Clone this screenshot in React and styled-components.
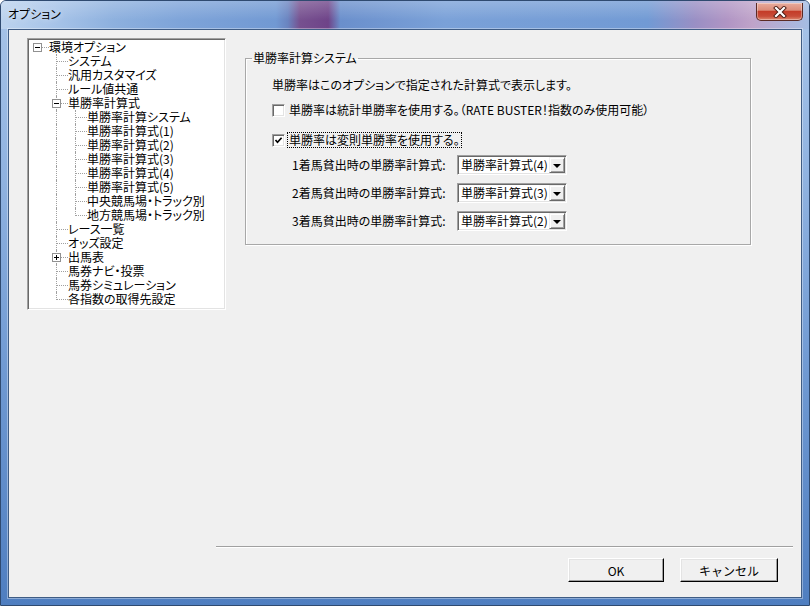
import React from "react";
import styled, { createGlobalStyle } from "styled-components";

const FONT = `"Noto Sans CJK JP", "Liberation Sans", sans-serif`;

const GlobalStyle = createGlobalStyle`
  html, body {
    margin: 0;
    padding: 0;
  }
  body {
    font-family: ${FONT};
    font-size: 12px;
    color: #000;
    font-feature-settings: "palt";
  }
`;

const Window = styled.div`
  width: 810px;
  height: 606px;
  box-sizing: border-box;
  display: flex;
  flex-direction: column;
  border: 1px solid #2f4a70;
  border-radius: 6px 6px 0 0;
  overflow: hidden;
  background: linear-gradient(180deg, #a8c4e8 0%, #8fb2e0 30%, #6f99d2 62%, #4f7ec0 100%);
`;

const TitleBar = styled.div`
  height: 28px;
  flex: none;
  display: flex;
  align-items: flex-start;
  justify-content: space-between;
  padding: 0 6px 0 7px;
  background: linear-gradient(180deg, rgba(255, 255, 255, 0.22), rgba(255, 255, 255, 0) 70%),
    linear-gradient(
      90deg,
      #bcd3ee 0%,
      #a9c5e9 6%,
      #8db0de 14%,
      #7ea4d9 22%,
      #7199d3 34%,
      #6a84c0 35.5%,
      #76508f 37%,
      #6e4388 40.5%,
      #6a8fcc 42%,
      #7aa1d8 55%,
      #719ad4 80%,
      #9a8fc4 86%,
      #b195c4 90%,
      #bfa3c9 93%,
      #a4bde3 100%
    );
`;

const Title = styled.div`
  margin-top: 6px;
  line-height: 14px;
  font-size: 12px;
  color: #000;
  text-shadow: 0 0 6px rgba(255, 255, 255, 0.8);
`;

const CloseButton = styled.div`
  width: 47px;
  height: 18px;
  margin-top: 2px;
  box-sizing: border-box;
  display: flex;
  align-items: center;
  justify-content: center;
  border: 1px solid #5b2a24;
  border-top: none;
  border-radius: 0 0 5px 5px;
  background: linear-gradient(180deg, #e8ab9c 0%, #dc8b78 42%, #c43c28 50%, #c84c38 78%, #de8a70 100%);
  box-shadow: inset 0 0 0 1px rgba(255, 255, 255, 0.35);
`;

const Client = styled.div`
  flex: 1;
  margin: 0 7px 7px 7px;
  border: 1px solid #3f5c84;
  box-shadow: 0 0 0 1px rgba(255, 255, 255, 0.35);
  background: #f0f0f0;
  display: flex;
  flex-direction: column;
`;

const TopArea = styled.div`
  display: flex;
  align-items: flex-start;
  padding: 8px 0 0 18px;
`;

const Tree = styled.div`
  width: 199px;
  height: 272px;
  box-sizing: border-box;
  padding: 1px;
  background: #fff;
  border: 1px solid;
  border-color: #a0a0a0 #fff #fff #a0a0a0;
  box-shadow: inset 1px 1px 0 #696969, inset -1px -1px 0 #e3e3e3;
`;

const TreeRow = styled.div`
  display: flex;
  height: 14px;
  white-space: nowrap;
`;

const Guide = styled.div`
  position: relative;
  width: 19px;
  flex: none;

  &::before {
    content: ${(p) => (p.$v ? '""' : "none")};
    position: absolute;
    left: 8px;
    top: 0;
    height: ${(p) => (p.$v === "top" ? "8px" : "14px")};
    border-left: 1px dotted #a0a0a0;
  }

  &::after {
    content: ${(p) => (p.$h ? '""' : "none")};
    position: absolute;
    left: 9px;
    right: -1px;
    top: 7px;
    border-top: 1px dotted #a0a0a0;
  }
`;

const Expander = styled.div`
  position: absolute;
  z-index: 1;
  left: 4px;
  top: 3px;
  width: 9px;
  height: 9px;
  box-sizing: border-box;
  border: 1px solid #919191;
  background: #fff;

  &::before {
    content: "";
    position: absolute;
    left: 1px;
    top: 3px;
    width: 5px;
    height: 1px;
    background: #000;
  }

  &::after {
    content: ${(p) => (p.$plus ? '""' : "none")};
    position: absolute;
    left: 3px;
    top: 1px;
    width: 1px;
    height: 5px;
    background: #000;
  }
`;

const TreeLabel = styled.span`
  padding-left: 1px;
  line-height: 14px;
  font-size: 12px;
`;

const GroupBox = styled.fieldset`
  margin: 13px 0 0 19px;
  width: 506px;
  box-sizing: border-box;
  padding: 0;
  border: 1px solid #a8a8a8;
  box-shadow: inset 1px 1px 0 #fff, 1px 1px 0 #fff;
  min-width: 0;
`;

const Legend = styled.legend`
  margin-left: 6px;
  padding: 0 1px;
  line-height: 14px;
  font-size: 12px;
`;

const GroupBody = styled.div`
  display: flex;
  flex-direction: column;
  padding: 13px 0 13px 26px;
`;

const Description = styled.div`
  line-height: 14px;
`;

const CheckRow = styled.div`
  display: flex;
  align-items: center;
  height: 16px;
  margin-top: ${(p) => p.$mt}px;
`;

const CheckBox = styled.div`
  width: 13px;
  height: 13px;
  box-sizing: border-box;
  flex: none;
  display: flex;
  align-items: center;
  justify-content: center;
  background: #fff;
  border: 1px solid;
  border-color: #a0a0a0 #fff #fff #a0a0a0;
  box-shadow: inset 1px 1px 0 #696969, inset -1px -1px 0 #e3e3e3;
`;

const CheckLabel = styled.span`
  margin-left: 2px;
  padding: 0 1px;
  line-height: 14px;
  border: 1px ${(p) => (p.$focus ? "dotted #000" : "solid transparent")};
`;

const FormulaRow = styled.div`
  display: flex;
  align-items: center;
  height: 20px;
  margin-top: ${(p) => p.$mt}px;
  padding-left: 20px;
`;

const FormulaLabel = styled.span`
  width: 165px;
  flex: none;
  line-height: 14px;
`;

const Combo = styled.div`
  width: 110px;
  height: 20px;
  box-sizing: border-box;
  display: flex;
  align-items: stretch;
  background: #fff;
  border: 1px solid;
  border-color: #a0a0a0 #fff #fff #a0a0a0;
  box-shadow: inset 1px 1px 0 #696969, inset -1px -1px 0 #e3e3e3;
  padding: 1px;
`;

const ComboText = styled.span`
  flex: 1;
  padding-left: 2px;
  line-height: 16px;
  white-space: nowrap;
  overflow: hidden;
`;

const ComboArrow = styled.div`
  width: 16px;
  flex: none;
  box-sizing: border-box;
  display: flex;
  align-items: center;
  justify-content: center;
  background: #f0f0f0;
  border: 1px solid;
  border-color: #f0f0f0 #696969 #696969 #f0f0f0;
  box-shadow: inset 1px 1px 0 #fff, inset -1px -1px 0 #a0a0a0;

  &::before {
    content: "";
    width: 0;
    height: 0;
    border-left: 4px solid transparent;
    border-right: 4px solid transparent;
    border-top: 4px solid #000;
    margin-top: 1px;
  }
`;

const Spacer = styled.div`
  flex: 1;
`;

const Separator = styled.div`
  height: 1px;
  margin: 0 8px 0 207px;
  background: #a0a0a0;
  border-bottom: 1px solid #fff;
`;

const ButtonRow = styled.div`
  display: flex;
  justify-content: flex-end;
  gap: 16px;
  padding: 10px 23px 15px 0;
`;

const Button = styled.button`
  width: ${(p) => p.$w}px;
  height: 24px;
  padding: 0;
  font-family: ${FONT};
  font-size: 12px;
  color: #000;
  background: #f0f0f0;
  border: 1px solid;
  border-color: #fff #000 #000 #fff;
  box-shadow: inset -1px -1px 0 #a0a0a0, inset 1px 1px 0 #e3e3e3;
`;

const items = [
  { level: 0, label: "環境オプション", box: "minus" },
  { level: 1, label: "システム" },
  { level: 1, label: "汎用カスタマイズ" },
  { level: 1, label: "ルール値共通" },
  { level: 1, label: "単勝率計算式", box: "minus" },
  { level: 2, label: "単勝率計算システム" },
  { level: 2, label: "単勝率計算式(1)" },
  { level: 2, label: "単勝率計算式(2)" },
  { level: 2, label: "単勝率計算式(3)" },
  { level: 2, label: "単勝率計算式(4)" },
  { level: 2, label: "単勝率計算式(5)" },
  { level: 2, label: "中央競馬場・トラック別" },
  { level: 2, label: "地方競馬場・トラック別" },
  { level: 1, label: "レース一覧" },
  { level: 1, label: "オッズ設定" },
  { level: 1, label: "出馬表", box: "plus" },
  { level: 1, label: "馬券ナビ・投票" },
  { level: 1, label: "馬券シミュレーション" },
  { level: 1, label: "各指数の取得先設定" },
];

// does a sibling at this level still follow item i?
const continues = (i, level) => {
  for (let j = i + 1; j < items.length; j++) {
    if (items[j].level < level) return false;
    if (items[j].level === level) return true;
  }
  return false;
};

const formulas = [
  { label: "1着馬貧出時の単勝率計算式:", value: "単勝率計算式(4)" },
  { label: "2着馬貧出時の単勝率計算式:", value: "単勝率計算式(3)" },
  { label: "3着馬貧出時の単勝率計算式:", value: "単勝率計算式(2)" },
];

const CloseIcon = () => (
  <svg width="14" height="12" viewBox="0 0 14 12">
    <path d="M3 2 L11 10 M11 2 L3 10" stroke="#4a1a12" strokeWidth="4" strokeLinecap="square" />
    <path d="M3 2 L11 10 M11 2 L3 10" stroke="#fff" strokeWidth="2.2" strokeLinecap="square" />
  </svg>
);

const CheckMark = () => (
  <svg width="9" height="9" viewBox="0 0 9 9">
    <path d="M1.5 4 L3.5 6.3 L7.6 1.8" fill="none" stroke="#000" strokeWidth="1.7" />
  </svg>
);

const App = () => {
  return (
    <>
      <GlobalStyle />
      <Window>
        <TitleBar>
          <Title>オプション</Title>
          <CloseButton>
            <CloseIcon />
          </CloseButton>
        </TitleBar>
        <Client>
          <TopArea>
            <Tree>
              {items.map((item, i) => (
                <TreeRow key={i}>
                  {Array.from({ length: item.level }, (_, k) => (
                    <Guide key={k} $v={k > 0 && continues(i, k) ? "full" : null} />
                  ))}
                  <Guide
                    $h
                    $v={item.level === 0 ? null : continues(i, item.level) ? "full" : "top"}
                  >
                    {item.box && <Expander $plus={item.box === "plus"} />}
                  </Guide>
                  <TreeLabel>{item.label}</TreeLabel>
                </TreeRow>
              ))}
            </Tree>
            <GroupBox>
              <Legend>単勝率計算システム</Legend>
              <GroupBody>
                <Description>単勝率はこのオプションで指定された計算式で表示します。</Description>
                <CheckRow $mt={10}>
                  <CheckBox />
                  <CheckLabel>単勝率は統計単勝率を使用する。（RATE BUSTER！指数のみ使用可能）</CheckLabel>
                </CheckRow>
                <CheckRow $mt={14}>
                  <CheckBox>
                    <CheckMark />
                  </CheckBox>
                  <CheckLabel $focus>単勝率は変則単勝率を使用する。</CheckLabel>
                </CheckRow>
                {formulas.map((f, i) => (
                  <FormulaRow key={i} $mt={i === 0 ? 7 : 8}>
                    <FormulaLabel>{f.label}</FormulaLabel>
                    <Combo>
                      <ComboText>{f.value}</ComboText>
                      <ComboArrow />
                    </Combo>
                  </FormulaRow>
                ))}
              </GroupBody>
            </GroupBox>
          </TopArea>
          <Spacer />
          <Separator />
          <ButtonRow>
            <Button $w={96}>OK</Button>
            <Button $w={98}>キャンセル</Button>
          </ButtonRow>
        </Client>
      </Window>
    </>
  );
};

export default App;
